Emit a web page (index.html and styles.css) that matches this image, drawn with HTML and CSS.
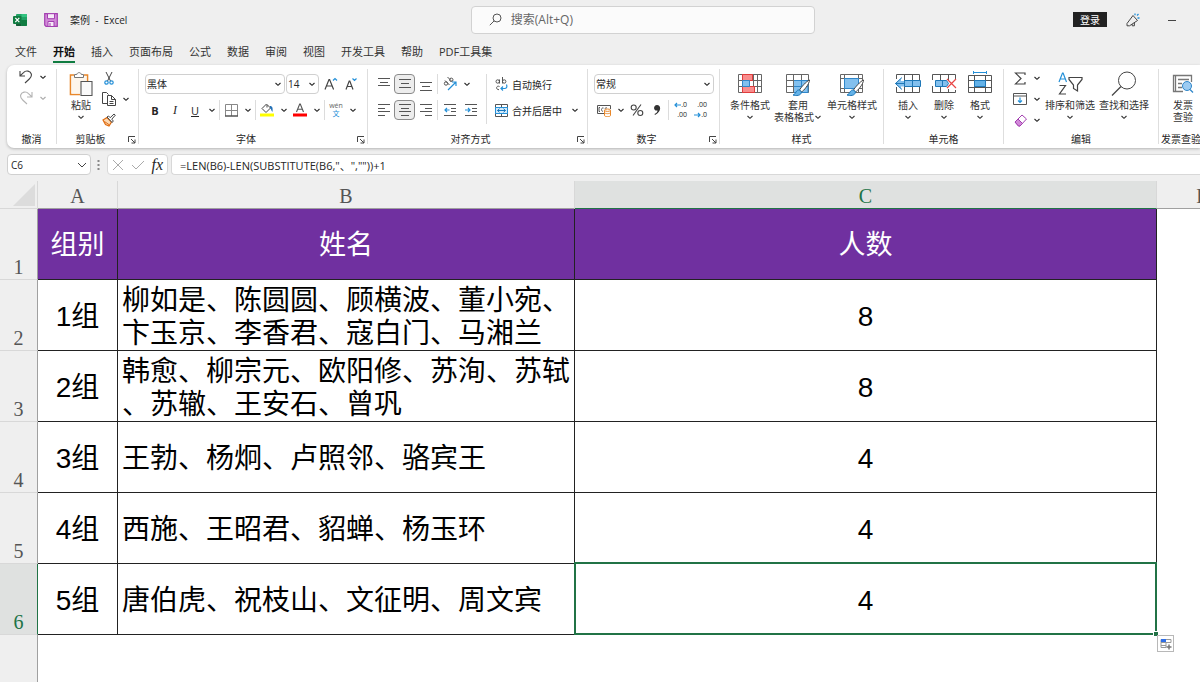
FILE: index.html
```html
<!DOCTYPE html>
<html lang="zh-CN">
<head>
    <meta charset="UTF-8">
    <meta name="viewport" content="width=device-width, initial-scale=1.0">
    <title>案例 - Excel</title>
    <link rel="stylesheet" href="styles.css">
</head>
<body>
    <!-- Shared icons -->
    <svg class="sprite">
        <symbol id="chev" viewBox="0 0 8 8"><path d="M1.500 3 4 5.300 6.500 3" fill="none" stroke="currentColor" stroke-width="1.100"/></symbol>
        <symbol id="launch" viewBox="0 0 8 8"><path d="M.5 6V.5H7M3 3l4 4M7 3.500V7H3.500" fill="none" stroke="#444"/></symbol>
    </svg>

    <header class="titlebar">
        <div class="title-left">
            <svg class="app-icon" viewBox="0 0 14 14"><rect x="3" y="1" width="11" height="12" rx="1" fill="#21a366"/><path d="M3 7h5.500v6H4a1 1 0 0 1-1-1z" fill="#185c37"/><path d="M8.500 1H13a1 1 0 0 1 1 1v2H8.500z" fill="#33c481"/><path d="M8.500 7H14v5a1 1 0 0 1-1 1H8.500z" fill="#107c41"/><rect y="3" width="8.500" height="8" rx="1" fill="#107c41"/><path d="m2.300 4.800 4 4.400M6.300 4.800l-4 4.400" stroke="#fff" stroke-width="1.200"/></svg>
            <button class="save" aria-label="保存"><svg width="14" height="14" viewBox="0 0 14 14"><path d="M.7.700h12.600v12.600H2L.7 12z" fill="#d18ad8" stroke="#a33fb0" stroke-width="1.200"/><path d="M3.500.7h7v5h-7z" fill="#f6eaf8" stroke="#a33fb0"/><path d="M4 13V8.500h6V13" fill="#f6eaf8" stroke="#a33fb0"/><path d="M6 10v3" stroke="#a33fb0"/></svg></button>
            <span>案例&nbsp; -&nbsp; Excel</span>
        </div>
        <label class="search">
            <svg width="13" height="13" viewBox="0 0 13 13"><circle cx="8" cy="5" r="4" fill="none" stroke="#555"/><path d="M5.200 7.800.8 12.200" stroke="#555"/></svg>
            <input type="text" placeholder="搜索(Alt+Q)" aria-label="搜索">
        </label>
        <div class="title-right">
            <button class="login">登录</button>
            <button aria-label="即将推出"><svg width="14" height="14" viewBox="0 0 14 14" fill="none"><path d="M7 2.500 1 10.500v2.300h2.500l8-5.300zM6.200 11.200v1.600h2.200V9.500" stroke="#444"/><path d="M9 .5v1.700M11 2.500 12.500 1M11.500 5H13.500" stroke="#2490d8" stroke-width="1.300"/></svg></button>
            <button aria-label="最小化"><svg width="10" height="10"><path d="M1 5.500h8" stroke="#444"/></svg></button>
        </div>
    </header>

    <nav class="tabs">
        <a href="#">文件</a>
        <a href="#" class="active">开始</a>
        <a href="#">插入</a>
        <a href="#">页面布局</a>
        <a href="#">公式</a>
        <a href="#">数据</a>
        <a href="#">审阅</a>
        <a href="#">视图</a>
        <a href="#">开发工具</a>
        <a href="#">帮助</a>
        <a href="#">PDF工具集</a>
    </nav>

    <section class="ribbon">
        <!-- Undo -->
        <div class="group g-undo">
            <div class="body stack">
                <div class="row"><button class="tool" aria-label="撤销"><svg width="14" height="14" viewBox="0 0 14 14" fill="none" stroke="#444" stroke-width="1.100"><path d="M1 1v5h5M1.300 5.700 4.500 2.600C7-.2 11.500 1 12.300 4c.6 2.300-.5 3.700-2 5L6 13"/></svg></button><button class="drop" aria-label="更多"><svg><use href="#chev"/></svg></button></div>
                <div class="row faded"><button class="tool" aria-label="恢复"><svg width="14" height="14" viewBox="0 0 14 14" fill="none" stroke="#444" stroke-width="1.100"><path d="M13 1v5H8M12.700 5.700 9.500 2.600C7-.2 2.500 1 1.700 4c-.6 2.300.5 3.700 2 5L8 13"/></svg></button><button class="drop" aria-label="更多"><svg><use href="#chev"/></svg></button></div>
            </div>
            <div class="name">撤消</div>
        </div>

        <!-- Clipboard -->
        <div class="group g-clip">
            <div class="body">
                <button class="big">
                    <svg width="26" height="26" viewBox="0 0 26 26" fill="none"><path d="M6 4H2.500v19.500H12M16 4h3.500v6" stroke="#e8872a" stroke-width="1.600"/><path d="M3.500 5h15v5H13v12.500H3.500z" fill="#fdf6ec"/><path d="M6.500 6.500v-3h2.300C9.200 1 13 1 13.300 3.500h2.200v3z" fill="#fff" stroke="#777"/><path d="M13 10.500h11v14H13z" fill="#fafafa" stroke="#555" stroke-width="1.100"/></svg>
                    粘贴<svg class="chev"><use href="#chev"/></svg>
                </button>
                <div class="stack">
                    <div class="row"><button class="tool" aria-label="剪切"><svg width="10" height="13" viewBox="0 0 10 13" fill="none"><path d="M2 0l4.500 9M8 0 3.500 9" stroke="#444"/><circle cx="2.500" cy="10.500" r="1.700" stroke="#2490d8" stroke-width="1.200"/><circle cx="7.500" cy="10.500" r="1.700" stroke="#2490d8" stroke-width="1.200"/></svg></button></div>
                    <div class="row"><button class="tool" aria-label="复制"><svg width="14" height="14" viewBox="0 0 14 14" fill="none" stroke="#444"><path d="M5 11.500H.5V.5h4l2 2"/><path d="M5.500 3.500h4l4 4v6h-8z" fill="#fff"/><path d="M9.500 3.500v4h4M7.500 9.500h4M7.500 11.500h4"/></svg></button><button class="drop" aria-label="更多"><svg><use href="#chev"/></svg></button></div>
                    <div class="row"><button class="tool" aria-label="格式刷"><svg width="14" height="14" viewBox="0 0 14 14"><path d="m1 7 4-2.500 4.500 4.500L7 13 3.500 11.500z" fill="#fbd9b5" stroke="#e06c10" stroke-width="1.200"/><path d="m2.500 8.500 5 3.500" stroke="#e06c10"/><path d="m5 4 1.500-1 1.700 1.700L12 1l1.300 1.200-3.500 4L11.300 8l-1.200 1.500z" fill="#fff" stroke="#444"/></svg></button></div>
                </div>
            </div>
            <div class="name">剪贴板<button class="launch" aria-label="剪贴板选项"><svg><use href="#launch"/></svg></button></div>
        </div>

        <!-- Font -->
        <div class="group g-font">
            <div class="body lines">
                <div class="row">
                    <span class="select font-name"><select aria-label="字体"><option>黑体</option></select><svg><use href="#chev"/></svg></span>
                    <span class="select font-size"><select aria-label="字号"><option>14</option></select><svg><use href="#chev"/></svg></span>
                    <button class="tool" aria-label="增大字号"><svg width="14" height="14" viewBox="0 0 14 14" fill="none"><path d="m1 12.500 4-10h.6l4 10M2.500 9h5.700" stroke="#444" stroke-width="1.200"/><path d="m9 3.500 2-2 2 2" stroke="#2490d8" stroke-width="1.200"/></svg></button>
                    <button class="tool" aria-label="减小字号"><svg width="14" height="14" viewBox="0 0 14 14" fill="none"><path d="M2 12.500 5.200 4h.6L9 12.500M3.200 9.500h4.600" stroke="#444" stroke-width="1.200"/><path d="m8.500 1.500 2 2 2-2" stroke="#2490d8" stroke-width="1.200"/></svg></button>
                </div>
                <div class="row">
                    <button class="tool bold">B</button>
                    <button class="tool italic">I</button>
                    <button class="tool underline">U</button>
                    <button class="drop" aria-label="更多"><svg><use href="#chev"/></svg></button>
                    <i class="sep"></i>
                    <button class="tool" aria-label="边框"><svg width="13" height="13" viewBox="0 0 13 13" fill="none"><path d="M.5 12V.5h12V12M6.500 1v11M1 6.500h11" stroke="#888"/><path d="M0 12h13" stroke="#555" stroke-width="1.500"/></svg></button>
                    <button class="drop" aria-label="更多"><svg><use href="#chev"/></svg></button>
                    <i class="sep"></i>
                    <button class="tool" aria-label="填充颜色"><svg width="14" height="14" viewBox="0 0 14 14" fill="none"><path d="M6.500 1 2 5.500l4 4L10.500 5 7 1.500v3" stroke="#444"/><path d="M10 3c2.500 0 3 2 2.500 6-1.500-1-1-3-2.500-4z" fill="#2472b8"/><path d="M0 10.500h14v3H0z" fill="#ffff00"/></svg></button>
                    <button class="drop" aria-label="更多"><svg><use href="#chev"/></svg></button>
                    <button class="tool" aria-label="字体颜色"><svg width="14" height="14" viewBox="0 0 14 14" fill="none"><path d="m3.500 9 3.200-8h.6l3.200 8M4.700 6.300h4.600" stroke="#555" stroke-width="1.100"/><path d="M0 10.500h14v3H0z" fill="#f00"/></svg></button>
                    <button class="drop" aria-label="更多"><svg><use href="#chev"/></svg></button>
                    <i class="sep"></i>
                    <button class="tool phonetic" aria-label="拼音"><span>wén</span><b>文</b></button>
                    <button class="drop" aria-label="更多"><svg><use href="#chev"/></svg></button>
                </div>
            </div>
            <div class="name">字体<button class="launch" aria-label="字体选项"><svg><use href="#launch"/></svg></button></div>
        </div>

        <!-- Alignment -->
        <div class="group g-align">
            <div class="body">
                <div class="lines">
                    <div class="row">
                        <button class="tool" aria-label="顶端对齐"><svg width="12" height="14"><path d="M0 1.500h12M2 5.500h8M0 8.500h12" stroke="#555"/></svg></button>
                        <button class="tool on" aria-label="垂直居中"><svg width="12" height="14"><path d="M0 2.500h12M2 6.500h8M0 10.500h12" stroke="#555"/></svg></button>
                        <button class="tool" aria-label="底端对齐"><svg width="12" height="14"><path d="M0 5.500h12M2 9.500h8M0 13.500h12" stroke="#555"/></svg></button>
                        <i class="sep"></i>
                        <button class="tool" aria-label="方向"><svg width="14" height="14" viewBox="0 0 14 14" fill="none"><g stroke="#555"><circle cx="3" cy="6.500" r="1.700"/><path d="m2 3.500 4.500 4.500M4.500 0 9 4.500"/><circle cx="8.300" cy="2.800" r="1.700"/></g><path d="m5 13 8-8M9 5h4v4" stroke="#2490d8" stroke-width="1.200"/></svg></button>
                        <button class="drop" aria-label="更多"><svg><use href="#chev"/></svg></button>
                    </div>
                    <div class="row">
                        <button class="tool" aria-label="左对齐"><svg width="12" height="14"><path d="M0 1.500h12M0 5.500h7M0 8.500h12M0 12.500h7" stroke="#555"/></svg></button>
                        <button class="tool on" aria-label="居中"><svg width="12" height="14"><path d="M0 1.500h12M2 5.500h8M0 8.500h12M2 12.500h8" stroke="#555"/></svg></button>
                        <button class="tool" aria-label="右对齐"><svg width="12" height="14"><path d="M0 1.500h12M5 5.500h7M0 8.500h12M5 12.500h7" stroke="#555"/></svg></button>
                        <i class="sep"></i>
                        <button class="tool" aria-label="减少缩进"><svg width="12" height="14" fill="none"><path d="M0 1.500h12M7 5.500h5M7 8.500h5M0 12.500h12" stroke="#555"/><path d="M5.500 7H1M3 5 1 7l2 2" stroke="#2490d8" stroke-width="1.200"/></svg></button>
                        <button class="tool" aria-label="增加缩进"><svg width="12" height="14" fill="none"><path d="M0 1.500h12M7 5.500h5M7 8.500h5M0 12.500h12" stroke="#555"/><path d="M0 7h5M3 5l2 2-2 2" stroke="#2490d8" stroke-width="1.200"/></svg></button>
                    </div>
                </div>
                <i class="sep tall"></i>
                <div class="lines">
                    <div class="row">
                        <button class="text-tool"><svg width="13" height="14" viewBox="0 0 13 14" fill="none"><g stroke="#555"><circle cx="2.700" cy="4.500" r="1.700"/><path d="M4.500 2.500v4M7.500 0v6.500M4.500 9.500c-3-1.500-4.500 3-.5 3.200"/><circle cx="9.200" cy="4.500" r="1.700"/></g><path d="M11.500 7.500c1 2.500 0 4-2 4H6M8 9.500l-2 2 2 2" stroke="#2490d8" stroke-width="1.200"/></svg>自动换行</button>
                    </div>
                    <div class="row">
                        <button class="text-tool"><svg width="13" height="13" viewBox="0 0 13 13" fill="none"><path d="M.5.500h12v12H.5zM6.500.5v3M6.500 9.500v3" stroke="#555"/><path d="M.5 3.500h12v6H.5z" fill="#d3e9f9" stroke="#2490d8"/><path d="M2.500 6.500h8M4.500 4.700 2.500 6.500l2 1.800M8.500 4.700l2 1.800-2 1.800" stroke="#1878bd"/></svg>合并后居中</button>
                        <button class="drop" aria-label="更多"><svg><use href="#chev"/></svg></button>
                    </div>
                </div>
            </div>
            <div class="name">对齐方式<button class="launch" aria-label="对齐选项"><svg><use href="#launch"/></svg></button></div>
        </div>

        <!-- Number -->
        <div class="group g-number">
            <div class="body lines">
                <div class="row"><span class="select format"><select aria-label="数字格式"><option>常规</option></select><svg><use href="#chev"/></svg></span></div>
                <div class="row">
                    <button class="tool" aria-label="会计数字格式"><svg width="14" height="13" viewBox="0 0 14 13" fill="none"><path d="M7 9.500H.5v-8h13V5M3 3.500H2v4h1M6.500 4C5 3.500 4.500 5 4.500 5.500S5 7.500 6 7.500M10 4c-1-.5-2 0-2 1" stroke="#555"/><path d="M7.500 6v5.500c0 1.500 6 1.500 6 0V6" fill="#fff" stroke="#e8872a"/><ellipse cx="10.500" cy="6.200" rx="3" ry="1.200" fill="#fff" stroke="#e8872a"/><path d="M7.500 8.500c0 1.500 6 1.500 6 0" stroke="#e8872a"/></svg></button>
                    <button class="drop" aria-label="更多"><svg><use href="#chev"/></svg></button>
                    <button class="tool" aria-label="百分比"><svg width="14" height="14" viewBox="0 0 14 14" fill="none" stroke="#444" stroke-width="1.100"><circle cx="3.700" cy="4.500" r="2.500"/><circle cx="10.300" cy="10" r="2.500"/><path d="m11 1.500-8 11"/></svg></button>
                    <button class="tool" aria-label="千位分隔"><svg width="8" height="12" viewBox="0 0 8 12"><path d="M4 1c4.500 0 4.500 7-2 10l-.5-1C3.500 9 4.500 8 4.500 6.500 0 7.500 0 1 4 1z" fill="#333"/></svg></button>
                    <i class="sep"></i>
                    <button class="tool decimals" aria-label="增加小数位数"><span><svg width="7" height="6"><path d="M7 3H1M3 1 1 3l2 2" fill="none" stroke="#2490d8" stroke-width="1.200"/></svg>.0</span><span>.00</span></button>
                    <button class="tool decimals" aria-label="减少小数位数"><span>.00</span><span><svg width="7" height="6"><path d="M0 3h6M4 1l2 2-2 2" fill="none" stroke="#2490d8" stroke-width="1.200"/></svg>.0</span></button>
                </div>
            </div>
            <div class="name">数字<button class="launch" aria-label="数字选项"><svg><use href="#launch"/></svg></button></div>
        </div>

        <!-- Styles -->
        <div class="group g-styles">
            <div class="body">
                <button class="big wide">
                    <svg width="26" height="26" viewBox="0 0 26 26" fill="none"><path d="M1.500 3.500h23v18h-23zM5.500 3.500v18M20.500 3.500v18M16.500 3.500v18M1.500 9.500h23M1.500 15.500h23" stroke="#666"/><path d="M5.500 3.500h10v6h-10zM5.500 15.500h12v6h-12z" fill="#f98d8d" stroke="#e03c3c"/><path d="M5.500 9.500h7v6h-7z" fill="#83c0ee" stroke="#2f86c9"/></svg>
                    条件格式<svg class="chev"><use href="#chev"/></svg>
                </button>
                <button class="big wide">
                    <svg width="26" height="26" viewBox="0 0 26 26" fill="none"><path d="M9 9h14v13H9z" fill="#83c0ee"/><path d="M1.500 3.500h22v18h-22zM8.500 3.500v18M16.500 3.500v18M1.500 9.500h22M1.500 15.500h22" stroke="#666"/><path d="M9 9.500h14v12H9M16.500 9.500v12M9 15.500h14" stroke="#2f86c9"/><path d="M24.500 9c-3 1-9 8-10 10l2 2c2-1 8-8 8-12z" fill="#fff" stroke="#444"/><path d="M14.500 19c-4-.5-3 4-6.500 5 3 1 8 1 8.500-3z" fill="#64b2e8" stroke="#1f78b8"/></svg>
                    套用<span class="inline">表格格式<svg class="chev"><use href="#chev"/></svg></span>
                </button>
                <button class="big extra">
                    <svg width="26" height="26" viewBox="0 0 26 26" fill="none"><path d="M1.500 3.500h22v18h-22zM5.500 3.500v18M19.500 3.500v18M1.500 7.500h22M1.500 17.500h22" stroke="#666"/><path d="M5.500 7.500h14v10h-14z" fill="#83c0ee" stroke="#2f86c9"/><path d="M24.500 9c-3 1-9 8-10 10l2 2c2-1 8-8 8-12z" fill="#fff" stroke="#444"/><path d="M14.500 19c-4-.5-3 4-6.500 5 3 1 8 1 8.500-3z" fill="#64b2e8" stroke="#1f78b8"/></svg>
                    单元格样式<svg class="chev"><use href="#chev"/></svg>
                </button>
            </div>
            <div class="name">样式</div>
        </div>

        <!-- Cells -->
        <div class="group g-cells">
            <div class="body">
                <button class="big">
                    <svg width="28" height="26" viewBox="0 0 28 26" fill="none"><path d="M2.500 8V3.500h23V9M2.500 16v5.500h23V16M10.500 3.500v18M18.500 3.500v18" stroke="#555"/><path d="M1 12.500 7 7v3h19.500v5.500H7V18z" fill="#83c0ee"/><path d="M26.500 9.500v6h-16v-6zM18.500 9.500v6M8 6.500l-6.500 6L8 18.500M1.500 12.500h9" stroke="#1f78b8"/></svg>
                    插入<svg class="chev"><use href="#chev"/></svg>
                </button>
                <button class="big">
                    <svg width="28" height="26" viewBox="0 0 28 26" fill="none"><path d="M2.500 9V3.500h23V9M2.500 15v6.500h23V19M10.500 3.500v6M18.500 3.500v6M10.500 15v6M18.500 18v3" stroke="#555"/><path d="M5.500 9.500h11l2 3-2 3h-11zM12.500 9.500v6" fill="#83c0ee" stroke="#1f78b8"/><path d="m17 8 9 9M26 8l-9 9" stroke="#e84545" stroke-width="1.200"/></svg>
                    删除<svg class="chev"><use href="#chev"/></svg>
                </button>
                <button class="big">
                    <svg width="28" height="26" viewBox="0 0 28 26" fill="none"><path d="M2.500 4.500h23v17h-23zM8.500 4.500v17M19.500 4.500v17M2.500 9.500h23M2.500 16.500h23" stroke="#555"/><path d="M8.500 9.500h11v6h-11z" fill="#64b2e8" stroke="#1f78b8"/><path d="M7.500 1.500h13M7.500 0v3M20.500 0v3" stroke="#2490d8"/></svg>
                    格式<svg class="chev"><use href="#chev"/></svg>
                </button>
            </div>
            <div class="name">单元格</div>
        </div>

        <!-- Editing -->
        <div class="group g-edit">
            <div class="body">
                <div class="stack">
                    <div class="row"><button class="tool" aria-label="自动求和"><svg width="13" height="13" viewBox="0 0 13 13" fill="none"><path d="M11 3V1H1.500L7 6.500 1.500 12H11v-2" stroke="#444" stroke-width="1.200"/></svg></button><button class="drop" aria-label="更多"><svg><use href="#chev"/></svg></button></div>
                    <div class="row"><button class="tool" aria-label="填充"><svg width="14" height="13" viewBox="0 0 14 13" fill="none"><path d="M.5.500h13v11H.5zM.5 3h13" stroke="#555"/><path d="M7 4.500v5M5 7.500l2 2 2-2" stroke="#2490d8" stroke-width="1.200"/></svg></button><button class="drop" aria-label="更多"><svg><use href="#chev"/></svg></button></div>
                    <div class="row"><button class="tool" aria-label="清除"><svg width="13" height="13" viewBox="0 0 13 13"><path d="m1 8 7-7 4.500 4L6 12H4.500z" fill="#fff" stroke="#a33fb0"/><path d="m1 8 3-3 4.500 4.500L6 12H4.500z" fill="#d18ad8" stroke="#a33fb0"/></svg></button><button class="drop" aria-label="更多"><svg><use href="#chev"/></svg></button></div>
                </div>
                <button class="big sort">
                    <svg width="26" height="26" viewBox="0 0 26 26" fill="none"><path d="m2 11 3.500-9h.6L9.500 11M3.300 8h5" stroke="#2490d8" stroke-width="1.200"/><path d="M2.500 14.500h6L2.500 23h6.500" stroke="#444" stroke-width="1.200"/><path d="M12 6.500h13v2L20.500 14v6l-4-2.500V14L12 8.500z" stroke="#444" stroke-width="1.200"/></svg>
                    排序和筛选<svg class="chev"><use href="#chev"/></svg>
                </button>
                <button class="big sort">
                    <svg width="26" height="26" viewBox="0 0 26 26" fill="none"><circle cx="16" cy="9.500" r="8.500" stroke="#444"/><path d="M10 15.500 1 24.500" stroke="#444" stroke-width="1.200"/></svg>
                    查找和选择<svg class="chev"><use href="#chev"/></svg>
                </button>
            </div>
            <div class="name">编辑</div>
        </div>

        <!-- Invoice -->
        <div class="group g-invoice">
            <div class="body">
                <button class="big">
                    <svg width="22" height="26" viewBox="0 0 22 26" fill="none"><path d="M3.500 20.500h-2v-16h18V11M3.500 20.500H11M3.500 4.500v16" stroke="#777" stroke-width="1.300"/><path d="M6 8.500h11M6 12.500h4M6 16.500h4" stroke="#777" stroke-width="1.300"/><circle cx="15" cy="15" r="4.500" fill="#9ccbf2" stroke="#2f86c9"/><path d="m18 18.500 3 3" stroke="#2f86c9" stroke-width="1.300"/></svg>
                    <span>发票</span><span>查验</span>
                </button>
            </div>
            <div class="name">发票查验</div>
        </div>
    </section>

    <!-- Formula bar -->
    <section class="formula-bar">
        <span class="select name-box"><input type="text" value="C6" aria-label="名称框"><svg viewBox="0 0 12 12"><path d="m2 4 4 4 4-4" fill="none" stroke="#444"/></svg></span>
        <svg class="dots" width="3" height="11"><path d="M1.500 1v2M1.500 5v2M1.500 9v2" stroke="#888" stroke-width="2"/></svg>
        <div class="fx">
            <button aria-label="取消"><svg width="12" height="12"><path d="m1 1 10 10M11 1 1 11" stroke="#aaa"/></svg></button>
            <button aria-label="输入"><svg width="14" height="12"><path d="m1 6 4 4 8-8" fill="none" stroke="#aaa"/></svg></button>
            <button class="fx-btn">fx</button>
        </div>
        <input class="formula" type="text" aria-label="编辑栏" value='=LEN(B6)-LEN(SUBSTITUTE(B6,"、",""))+1'>
    </section>

    <main class="sheet">
        <table>
            <colgroup><col class="col-head"><col class="col-a"><col class="col-b"><col class="col-c"><col class="col-d"></colgroup>
            <thead>
                <tr><th class="corner"><svg width="22" height="22"><path d="M22 0v22H0z" fill="#dcdcdc"/></svg></th><th>A</th><th>B</th><th class="selected">C</th><th>D</th></tr>
            </thead>
            <tbody>
                <tr class="heading"><th>1</th><td>组别</td><td>姓名</td><td>人数</td><td></td></tr>
                <tr><th>2</th><td>1组</td><td>柳如是、陈圆圆、顾横波、董小宛、<br>卞玉京、李香君、寇白门、马湘兰</td><td>8</td><td></td></tr>
                <tr><th>3</th><td>2组</td><td>韩愈、柳宗元、欧阳修、苏洵、苏轼<br>、苏辙、王安石、曾巩</td><td>8</td><td></td></tr>
                <tr><th>4</th><td>3组</td><td>王勃、杨炯、卢照邻、骆宾王</td><td>4</td><td></td></tr>
                <tr><th>5</th><td>4组</td><td>西施、王昭君、貂蝉、杨玉环</td><td>4</td><td></td></tr>
                <tr><th class="selected">6</th><td>5组</td><td>唐伯虎、祝枝山、文征明、周文宾</td><td class="active-cell">4<button class="autofill" aria-label="自动填充选项"><svg width="12" height="12" fill="none"><path d="M1 1.500h10v3H1zM1 4.500h5v5H1zM1 7.500h5" stroke="#999"/><path d="M1 1h5v3H1z" fill="#2f6fe8"/><path d="M9 6.500v5M6.500 9h5" stroke="#777" stroke-width="1.500"/></svg></button></td><td></td></tr>
                <tr class="blank"><th></th><td></td><td></td><td></td><td></td></tr>
            </tbody>
        </table>
    </main>
</body>
</html>
```

FILE: styles.css
```css
* {
    margin: 0;
    padding: 0;
    box-sizing: border-box;
}

body {
    background: #efefef;
    color: #262626;
    font-family: "Open Sans", "Noto Sans CJK SC", sans-serif;
    font-size: 10px;
    height: 100vh;
    display: flex;
    flex-direction: column;
    overflow: hidden;
}

button, input, select {
    font: inherit;
    color: inherit;
    background: none;
    border: none;
    outline: none;
}

button {
    display: flex;
    align-items: center;
    justify-content: center;
    white-space: nowrap;
}

svg {
    display: block;
    flex: none;
}

.sprite {
    position: absolute;
    width: 0;
    height: 0;
}

/* Title bar */
.titlebar {
    display: grid;
    grid-template-columns: 11fr 344px 9fr;
    align-items: center;
    height: 39px;
    flex: none;
}

.title-left {
    display: flex;
    align-items: center;
    padding-left: 13px;
}

.app-icon {
    width: 14px;
    height: 14px;
}

.save {
    margin: 0 12px 0 17px;
}

.search {
    display: flex;
    align-items: center;
    gap: 9px;
    height: 28px;
    padding-left: 17px;
    background: #fbfbfb;
    border: 1px solid #d2d2d2;
    border-radius: 4px;
}

.search input {
    flex: 1;
    font-size: 12px;
}

.search input::placeholder {
    color: #666;
}

.title-right {
    display: flex;
    align-items: center;
    justify-content: flex-end;
    gap: 19px;
    padding-right: 23px;
}

.title-right button:last-child {
    margin-left: 8px;
}

.login {
    width: 34px;
    height: 15px;
    background: #222;
    color: #fff;
}

/* Ribbon tabs */
.tabs {
    display: flex;
    gap: 16px;
    height: 26px;
    padding: 1px 0 0 15px;
    flex: none;
}

.tabs a {
    font-size: 11px;
    line-height: 20px;
    height: 22px;
    padding-top: 2px;
    color: #333;
    text-decoration: none;
    white-space: nowrap;
}

.tabs .active {
    font-weight: bold;
    color: #111;
    border-bottom: 2px solid #107c41;
    height: 23px;
}

/* Ribbon */
.ribbon {
    display: flex;
    flex: none;
    height: 83px;
    margin-left: 7px;
    padding: 4px 0;
    background: #fff;
    border-radius: 7px 0 0 7px;
    box-shadow: 0 1px 3px rgba(0, 0, 0, 0.25);
    overflow: hidden;
}

.group {
    display: flex;
    flex-direction: column;
    flex: none;
    border-right: 1px solid #dedede;
}

.g-undo { width: 50px; }
.g-clip { width: 82px; }
.g-font { width: 229px; }
.g-align { width: 220px; }
.g-number { width: 132px; }
.g-styles { width: 164px; }
.g-cells { width: 120px; }
.g-edit { width: 155px; }

.g-invoice {
    width: 48px;
    border-right: none;
}

.body {
    display: flex;
    flex: 1;
    padding-left: 6px;
}

.g-align .body {
    padding-left: 5px;
}

.name {
    position: relative;
    line-height: 10px;
    text-align: center;
    white-space: nowrap;
}

.g-clip .name,
.g-font .name,
.g-align .name,
.g-number .name {
    padding-right: 14px;
}

.g-invoice .name {
    text-align: left;
    padding-left: 2px;
}

.launch {
    position: absolute;
    right: 2px;
    top: 2px;
}

.launch svg {
    width: 8px;
    height: 8px;
}

.row {
    display: flex;
    align-items: center;
}

.lines {
    display: flex;
    flex-direction: column;
    gap: 6px;
    padding-top: 5px;
}

.lines .row {
    height: 20px;
}

.stack {
    display: flex;
    flex-direction: column;
    gap: 5px;
}

.stack .row {
    height: 16px;
}

.g-undo .body {
    padding-left: 9px;
}

.faded {
    opacity: 0.4;
}

.tool {
    width: 20px;
    height: 20px;
    border-radius: 4px;
    flex: none;
}

.drop {
    width: 13px;
    height: 20px;
    flex: none;
}

.drop svg,
.chev {
    width: 8px;
    height: 8px;
}

.g-align .tool {
    width: 21px;
}

.on {
    background: #ededed;
    border: 1px solid #8a8a8a;
}

.sep {
    width: 1px;
    height: 20px;
    margin: 0 1px;
    background: #dcdcdc;
    flex: none;
}

.tall {
    height: 50px;
    margin: 5px 8px 0 5px;
}

.bold {
    font-weight: bold;
    font-size: 11px;
}

.italic {
    font-family: "Liberation Serif", serif;
    font-style: italic;
    font-size: 12px;
}

.underline {
    font-size: 11px;
    text-decoration: underline;
}

.phonetic {
    flex-direction: column;
    font-size: 7px;
    line-height: 8px;
    color: #666;
}

.phonetic b {
    font-weight: normal;
    color: #2490d8;
}

.decimals {
    flex-direction: column;
    align-items: flex-end;
    padding-right: 3px;
    font-size: 7px;
    line-height: 10px;
}

.decimals span {
    display: flex;
    align-items: center;
    height: 10px;
}

.select {
    display: flex;
    align-items: center;
    height: 20px;
    border: 1px solid #d0d0d0;
    border-radius: 4px;
    padding: 0 2px 0 1px;
    background: #fff;
}

.select select,
.select input {
    appearance: none;
    flex: 1;
    min-width: 0;
}

.select svg {
    width: 8px;
    height: 8px;
}

.font-name { width: 140px; }
.font-size { width: 33px; margin: 0 2px 0 1px; }
.format { width: 120px; }

.text-tool {
    gap: 4px;
}

.text-tool + .drop {
    margin-left: 6px;
}

/* Large ribbon buttons */
.big {
    display: flex;
    flex-direction: column;
    justify-content: flex-start;
    width: 36px;
    padding-top: 2px;
    line-height: 12px;
    color: #333;
}

.big > svg:first-child {
    margin-bottom: 2px;
}

.big > .chev {
    margin-top: 2px;
}

.inline {
    display: flex;
    align-items: center;
}

.wide { width: 48px; }
.extra { width: 60px; }
.sort { width: 54px; }

.g-clip .stack,
.g-edit .stack {
    padding-top: 1px;
}

/* Formula bar */
.formula-bar {
    display: flex;
    align-items: center;
    flex: none;
    height: 33px;
    padding-left: 7px;
}

.name-box {
    width: 84px;
    height: 21px;
    padding: 0 2px 0 3px;
}

.name-box svg {
    width: 12px;
    height: 12px;
}

.dots {
    margin: 0 7px 0 6px;
}

.fx {
    display: flex;
    align-items: center;
    justify-content: space-between;
    width: 61px;
    height: 21px;
    padding: 0 4px;
    background: #fff;
    border: 1px solid #d8d8d8;
    border-radius: 4px;
}

.fx-btn {
    font-family: "Liberation Serif", serif;
    font-style: italic;
    font-size: 16px;
}

.formula {
    flex: 1;
    height: 21px;
    margin-left: 3px;
    padding-left: 8px;
    font-size: 11px;
    background: #fff;
    border: 1px solid #d8d8d8;
    border-right: none;
    border-radius: 4px 0 0 4px;
}

/* Sheet */
.sheet {
    flex: 1;
    min-height: 0;
    overflow: hidden;
}

table {
    table-layout: fixed;
    width: 1251px;
    border-collapse: separate;
    border-spacing: 0;
}

.col-head { width: 38px; }
.col-a { width: 80px; }
.col-b { width: 457px; }
.col-c { width: 582px; }
.col-d { width: 94px; }

th {
    font-family: "Liberation Serif", serif;
    font-weight: normal;
    font-size: 20px;
    line-height: 24px;
    color: #555;
    background: #efefef;
}

thead th {
    height: 28px;
    padding-top: 3px;
    border-right: 1px solid #d8d8d8;
    border-bottom: 1px solid #a0a0a0;
}

thead .corner {
    padding: 0 2px 2px 0;
    vertical-align: bottom;
    border-bottom-color: #d8d8d8;
}

.corner svg {
    margin-left: auto;
}

tbody th {
    height: 71px;
    vertical-align: bottom;
    border-right: 1px solid #a0a0a0;
    border-bottom: 1px solid #d8d8d8;
}

thead .selected {
    background: #dfe1e0;
    color: #217346;
    border-bottom-color: #217346;
}

tbody .selected {
    background: #dfe1e0;
    color: #217346;
    border-right-color: #217346;
}

td {
    font-family: "Liberation Sans", "Noto Sans CJK SC", sans-serif;
    font-size: 28px;
    line-height: 33px;
    color: #000;
    background: #fff;
    text-align: center;
    vertical-align: middle;
    padding-top: 3px;
    border-right: 1px solid #222;
    border-bottom: 1px solid #222;
    white-space: nowrap;
}

td:nth-child(3) {
    text-align: left;
    padding-left: 4px;
}

td:last-child,
.blank td {
    border: none;
}

.heading td {
    background: #7030a0;
    color: #fff;
    font-size: 27px;
}

.heading td:last-child {
    background: #fff;
}

.heading td:nth-child(3) {
    text-align: center;
    padding-left: 0;
}

.active-cell {
    position: relative;
}

.active-cell::before {
    content: "";
    position: absolute;
    inset: -2px -1px -1px -1px;
    border: 2px solid #217346;
}

.active-cell::after {
    content: "";
    position: absolute;
    right: -2px;
    bottom: -2px;
    width: 4px;
    height: 4px;
    background: #217346;
    box-shadow: 0 0 0 1px #fff;
}

.autofill {
    position: absolute;
    left: 100%;
    top: 100%;
    z-index: 1;
    width: 17px;
    height: 17px;
    margin: 1px 0 0 1px;
    background: #fff;
    border: 1px solid #b8b8b8;
}
```
